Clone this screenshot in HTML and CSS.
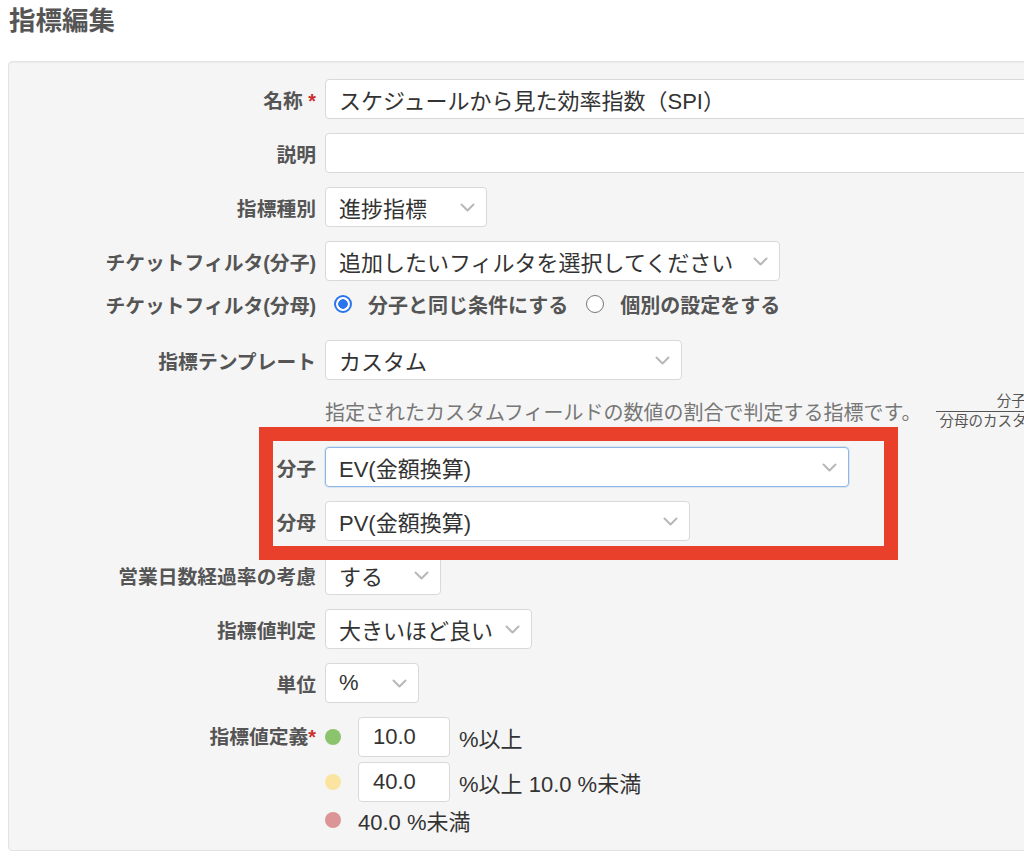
FILE: index.html
```html
<!DOCTYPE html>
<html lang="ja">
<head>
<meta charset="utf-8">
<title>指標編集</title>
<link rel="stylesheet" href="styles.css">
</head>
<body>
<div class="page">
  <h1 class="title">指標編集</h1>
  <div class="panel">
    <div class="row">
      <div class="lbl">名称 <span class="req">*</span></div>
      <div class="box wide">スケジュールから見た効率指数（SPI）</div>
    </div>
    <div class="row">
      <div class="lbl">説明</div>
      <div class="box wide"></div>
    </div>
    <div class="row">
      <div class="lbl">指標種別</div>
      <div class="box select w-kind"><span>進捗指標</span><svg class="chev" viewBox="0 0 15 9"><polyline points="1.5,1.5 7.5,7.5 13.5,1.5"/></svg></div>
    </div>
    <div class="row mb-3">
      <div class="lbl">チケットフィルタ(分子)</div>
      <div class="box select w-filter"><span>追加したいフィルタを選択してください</span><svg class="chev" viewBox="0 0 15 9"><polyline points="1.5,1.5 7.5,7.5 13.5,1.5"/></svg></div>
    </div>
    <div class="row row-radio mb-16">
      <div class="lbl">チケットフィルタ(分母)</div>
      <div class="radios">
        <span class="radio on"></span><span class="rlabel">分子と同じ条件にする</span>
        <span class="radio"></span><span class="rlabel">個別の設定をする</span>
      </div>
    </div>
    <div class="row mb-11">
      <div class="lbl">指標テンプレート</div>
      <div class="box select w-tpl"><span>カスタム</span><svg class="chev" viewBox="0 0 15 9"><polyline points="1.5,1.5 7.5,7.5 13.5,1.5"/></svg></div>
    </div>
    <div class="row desc-row mb-16">
      <div class="lbl"></div>
      <div class="desc">指定されたカスタムフィールドの数値の割合で判定する指標です。</div>
      <div class="frac"><span class="num">分子のカスタム値</span><span class="den">分母のカスタムフィールドの合計値</span></div>
    </div>
    <div class="group">
      <div class="row">
        <div class="lbl">分子</div>
        <div class="box select focus w-num"><span>EV(金額換算)</span><svg class="chev" viewBox="0 0 15 9"><polyline points="1.5,1.5 7.5,7.5 13.5,1.5"/></svg></div>
      </div>
      <div class="row">
        <div class="lbl">分母</div>
        <div class="box select w-den"><span>PV(金額換算)</span><svg class="chev" viewBox="0 0 15 9"><polyline points="1.5,1.5 7.5,7.5 13.5,1.5"/></svg></div>
      </div>
      <div class="highlight"></div>
    </div>
    <div class="row">
      <div class="lbl">営業日数経過率の考慮</div>
      <div class="box select w-bd"><span>する</span><svg class="chev" viewBox="0 0 15 9"><polyline points="1.5,1.5 7.5,7.5 13.5,1.5"/></svg></div>
    </div>
    <div class="row">
      <div class="lbl">指標値判定</div>
      <div class="box select w-judge"><span>大きいほど良い</span><svg class="chev" viewBox="0 0 15 9"><polyline points="1.5,1.5 7.5,7.5 13.5,1.5"/></svg></div>
    </div>
    <div class="row">
      <div class="lbl">単位</div>
      <div class="box select w-unit"><span>%</span><svg class="chev" viewBox="0 0 15 9"><polyline points="1.5,1.5 7.5,7.5 13.5,1.5"/></svg></div>
    </div>
    <div class="row row-def">
      <div class="lbl lbl-def">指標値定義<span class="req">*</span></div>
      <div class="def">
        <div class="def-line"><span class="dot green"></span><div class="box numbox">10.0</div><span class="def-text">%以上</span></div>
        <div class="def-line l2"><span class="dot yellow"></span><div class="box numbox">40.0</div><span class="def-text">%以上 10.0 %未満</span></div>
        <div class="def-line l3"><span class="dot red"></span><span class="def-text">40.0 %未満</span></div>
      </div>
    </div>
  </div>
</div>
</body>
</html>
```
FILE: styles.css
```css
html, body {
  margin: 0;
  overflow: hidden;
  background: #fff;
}
body {
  font-family: "Liberation Sans", "Noto Sans CJK JP", sans-serif;
  color: #333;
}
.page {
  padding-left: 8px;
  width: 1320px;
}
.title {
  margin: 0;
  padding-left: 1px;
  font-size: 26.5px;
  line-height: 42px;
  font-weight: bold;
  color: #555;
}
.panel {
  margin-top: 19px;
  width: 1280px;
  background: #f5f5f5;
  border: 1px solid #e3e3e3;
  border-radius: 4px;
  box-shadow: inset 0 1px 1px rgba(0,0,0,0.04);
  padding: 17px 0 18px;
}
.row {
  display: flex;
  align-items: center;
  margin-bottom: 14px;
}
.mb-3 { margin-bottom: 3px; }
.mb-11 { margin-bottom: 11px; }
.mb-16 { margin-bottom: 16px; }
.lbl {
  flex: none;
  width: 307px;
  padding-right: 9px;
  text-align: right;
  font-weight: bold;
  font-size: 19.8px;
  color: #555;
  white-space: nowrap;
}
.req {
  color: #c9302c;
}
.box {
  flex: none;
  box-sizing: border-box;
  height: 40px;
  border: 1px solid #d9d9d9;
  border-radius: 4px;
  background: #fff;
  font-size: 22px;
  color: #333;
  padding: 0 13px;
  display: flex;
  align-items: center;
  white-space: nowrap;
}
.wide { width: 920px; }
.select {
  justify-content: space-between;
  padding-right: 11px;
}
.chev {
  flex: none;
  width: 15px;
  height: 9px;
  fill: none;
  stroke: #b8b8b8;
  stroke-width: 2;
  stroke-linecap: round;
  stroke-linejoin: round;
}
.focus {
  border-color: #8db8e6;
  box-shadow: 0 0 0 1px rgba(141,184,230,0.25);
}
.w-kind { width: 162px; }
.w-filter { width: 455px; }
.w-tpl { width: 357px; }
.w-num { width: 524px; }
.w-den { width: 365px; }
.w-bd { width: 116px; }
.w-judge { width: 207px; }
.w-unit { width: 94px; }

.row-radio { height: 40px; }
.radios {
  display: flex;
  align-items: center;
  padding-left: 9px;
}
.radio {
  flex: none;
  box-sizing: border-box;
  width: 18px;
  height: 18px;
  border-radius: 50%;
  border: 1.5px solid #767676;
  background: #fff;
  margin-right: 16px;
}
.radio.on {
  border: 2px solid #2b74f0;
  background: radial-gradient(circle, #2b74f0 0 4.5px, #fff 5px);
}
.rlabel {
  font-size: 20px;
  font-weight: bold;
  color: #555;
  margin-right: 18px;
}

.desc-row { height: 40px; }
.desc {
  font-size: 20px;
  color: #777;
  white-space: nowrap;
}
.frac {
  display: inline-flex;
  flex-direction: column;
  align-items: center;
  margin-left: 15px;
  font-size: 14.5px;
  line-height: 17px;
  color: #555;
  white-space: nowrap;
}
.frac .num {
  align-self: stretch;
  text-align: center;
  border-bottom: 1px solid #555;
  padding-bottom: 1px;
}
.frac .den {
  padding: 1px 3px 0;
}

.group {
  position: relative;
}
.highlight {
  position: absolute;
  left: 250px;
  top: -20px;
  width: 639px;
  height: 133px;
  box-sizing: border-box;
  border: 14px solid #e8402a;
  z-index: 2;
  pointer-events: none;
}

.row-def {
  align-items: flex-start;
  margin-bottom: 0;
}
.lbl-def {
  line-height: 40px;
}
.def-line {
  display: flex;
  align-items: center;
  height: 40px;
}
.def-line.l2 { margin-top: 5px; }
.def-line.l3 { margin-top: 6px; height: 24px; }
.dot {
  flex: none;
  width: 16px;
  height: 16px;
  border-radius: 50%;
  margin-right: 17px;
}
.dot.green { background: #8cc46e; }
.dot.yellow { background: #fbe4a0; }
.dot.red { background: #dc9596; }
.numbox {
  width: 92px;
  padding: 0 14px;
}
.def-text {
  font-size: 22px;
  color: #333;
  margin-left: 9px;
  white-space: nowrap;
}
.l3 .def-text { margin-left: 0; }
```
